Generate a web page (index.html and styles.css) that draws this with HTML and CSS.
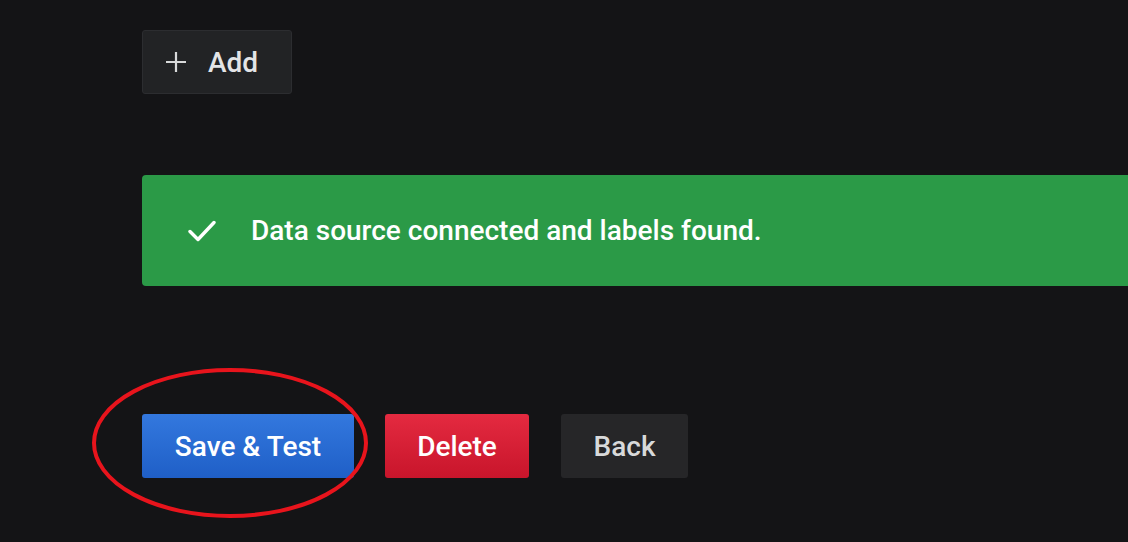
FILE: index.html
```html
<!DOCTYPE html>
<html>
<head>
<meta charset="utf-8">
<link rel="stylesheet" href="styles.css">
</head>
<body>
<div class="page">
  <button class="btn btn-add">
    <svg class="plus" viewBox="0 0 22 22" width="22" height="22"><path d="M11 1v20M1 11h20" stroke="#d8d9da" stroke-width="2.2" fill="none"/></svg>
    <span>Add</span>
  </button>

  <div class="alert">
    <svg class="check" viewBox="0 0 28 22" width="28" height="22"><path d="M2 11.5l8 8L26 2.5" stroke="#fff" stroke-width="3.4" fill="none" stroke-linecap="round" stroke-linejoin="round"/></svg>
    <span class="alert-text">Data source connected and labels found.</span>
  </div>

  <div class="actions">
    <div class="save-wrap">
      <button class="btn btn-primary">Save &amp; Test</button>
      <svg class="ring" viewBox="0 0 280 154" width="280" height="154"><ellipse cx="139" cy="76" rx="136" ry="73" stroke="#e8141c" stroke-width="4" fill="none"/></svg>
    </div>
    <button class="btn btn-danger">Delete</button>
    <button class="btn btn-secondary">Back</button>
  </div>
</div>
</body>
</html>
```
FILE: styles.css
```css
html, body {
  margin: 0;
  padding: 0;
  background: #141416;
  height: 100%;
  overflow: hidden;
}
.page {
  padding: 30px 0 0 142px;
  font-family: Roboto, "Liberation Sans", sans-serif;
}
.btn {
  font-family: Roboto, "Liberation Sans", sans-serif;
  font-weight: 500;
  font-size: 28px;
  height: 64px;
  border: none;
  border-radius: 3px;
  cursor: pointer;
  display: inline-flex;
  align-items: center;
  justify-content: center;
  padding: 0;
}
.btn-add {
  width: 150px;
  background: #222325;
  border: 1px solid #2c2d30;
  color: #e3e4e6;
  justify-content: flex-start;
  padding-left: 22px;
  gap: 21px;
}
.plus { display: block; }
.alert {
  margin-top: 81px;
  height: 111px;
  background: #2b9a47;
  border-radius: 4px 0 0 4px;
  display: flex;
  align-items: center;
  padding-left: 46px;
  gap: 35px;
  color: #fff;
}
.check { display: block; }
.alert-text {
  font-size: 28px;
  font-weight: 500;
  letter-spacing: 0;
}
.actions {
  margin-top: 128px;
  display: flex;
  gap: 31px;
}
.save-wrap {
  position: relative;
}
.ring {
  position: absolute;
  left: -51px;
  top: -47px;
  pointer-events: none;
}
.btn-primary {
  width: 212px;
  background: linear-gradient(#3378de, #1f5fc7);
  color: #fff;
}
.btn-danger {
  width: 144px;
  background: linear-gradient(#e42a40, #c8152b);
  color: #fff;
}
.btn-secondary {
  width: 127px;
  margin-left: 1px;
  background: #262628;
  color: #d8d9da;
}
```
